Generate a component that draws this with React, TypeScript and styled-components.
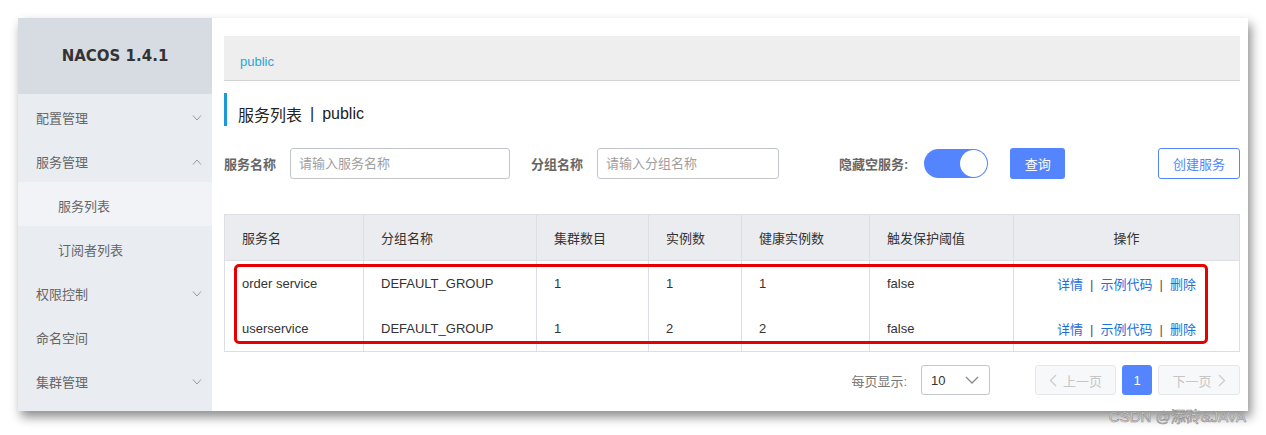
import React from 'react';
import styled, { createGlobalStyle } from 'styled-components';

const GlobalStyle = createGlobalStyle`
  body {
    margin: 0;
    background: #ffffff;
    font-family: "Liberation Sans", "Noto Sans CJK SC", sans-serif;
    font-size: 13px;
    color: #333;
  }
`;

const menus = [
  { label: '配置管理', arrow: 'down' },
  { label: '服务管理', arrow: 'up' },
  { label: '服务列表', sub: true, active: true },
  { label: '订阅者列表', sub: true },
  { label: '权限控制', arrow: 'down' },
  { label: '命名空间' },
  { label: '集群管理', arrow: 'down' },
];

const columns = [
  { title: '服务名', width: 139 },
  { title: '分组名称', width: 173 },
  { title: '集群数目', width: 112 },
  { title: '实例数', width: 93 },
  { title: '健康实例数', width: 128 },
  { title: '触发保护阈值', width: 144 },
  { title: '操作', width: 226, center: true },
];

const rows = [
  ['order service', 'DEFAULT_GROUP', '1', '1', '1', 'false'],
  ['userservice', 'DEFAULT_GROUP', '1', '2', '2', 'false'],
];

function Chevron({ dir }: { dir: string }) {
  return (
    <svg width="10" height="6" viewBox="0 0 10 6">
      <path
        d={dir === 'up' ? 'M1 5.5 L5 1 L9 5.5' : 'M1 0.5 L5 5 L9 0.5'}
        fill="none"
        stroke="#999"
        strokeWidth="1"
      />
    </svg>
  );
}

function App() {
  return (
    <Page>
      <GlobalStyle />
      <Window>
        <Sidebar>
          <Brand>NACOS 1.4.1</Brand>
          {menus.map((m) => (
            <MenuItem key={m.label} sub={!!m.sub} active={!!m.active}>
              <span>{m.label}</span>
              {m.arrow && <Chevron dir={m.arrow} />}
            </MenuItem>
          ))}
        </Sidebar>
        <Main>
          <Breadcrumb>public</Breadcrumb>
          <PageTitle>
            服务列表<Sep>|</Sep>public
          </PageTitle>
          <Filters>
            <Label>服务名称</Label>
            <Input width={220} placeholder="请输入服务名称" />
            <Label gap={21}>分组名称</Label>
            <Input width={182} placeholder="请输入分组名称" />
            <Label gap={60}>隐藏空服务:</Label>
            <Switch>
              <Knob />
            </Switch>
            <PrimaryButton>查询</PrimaryButton>
            <OutlineButton>创建服务</OutlineButton>
          </Filters>
          <TableWrap>
            <Table>
              <thead>
                <tr>
                  {columns.map((c) => (
                    <Th key={c.title} style={{ width: c.width }} center={!!c.center}>
                      {c.title}
                    </Th>
                  ))}
                </tr>
              </thead>
              <tbody>
                {rows.map((r, i) => (
                  <tr key={i}>
                    {r.map((v, j) => (
                      <Td key={j} first={i === 0}>
                        {v}
                      </Td>
                    ))}
                    <Td first={i === 0} center>
                      <Link>详情</Link>
                      <Bar>|</Bar>
                      <Link>示例代码</Link>
                      <Bar>|</Bar>
                      <Link>删除</Link>
                    </Td>
                  </tr>
                ))}
              </tbody>
            </Table>
            <Highlight />
          </TableWrap>
          <Pager>
            <PagerLabel>每页显示:</PagerLabel>
            <Select>
              <span>10</span>
              <svg width="14" height="8" viewBox="0 0 14 8">
                <path d="M1 1 L7 7 L13 1" fill="none" stroke="#888" strokeWidth="1.3" />
              </svg>
            </Select>
            <PageButton width={81} disabled>
              <svg width="8" height="13" viewBox="0 0 8 13">
                <path d="M7 1 L1.5 6.5 L7 12" fill="none" stroke="#ccc" strokeWidth="1.3" />
              </svg>
              上一页
            </PageButton>
            <PageButton width={30} current>
              1
            </PageButton>
            <PageButton width={82} disabled>
              下一页
              <svg width="8" height="13" viewBox="0 0 8 13">
                <path d="M1 1 L6.5 6.5 L1 12" fill="none" stroke="#ccc" strokeWidth="1.3" />
              </svg>
            </PageButton>
          </Pager>
        </Main>
        <Watermark>CSDN @添砖&amp;JAVA</Watermark>
      </Window>
    </Page>
  );
}

const Page = styled.div`
  padding: 18px 0 0 18px;
  height: 435px;
  box-sizing: border-box;
`;

const Window = styled.div`
  position: relative;
  display: flex;
  width: 1230px;
  height: 393px;
  background: #fff;
  box-shadow: 3px 6px 10px rgba(0, 0, 0, 0.45);
`;

const Sidebar = styled.aside`
  width: 194px;
  flex-shrink: 0;
  background: #e9ecf1;
`;

const Brand = styled.div`
  height: 76px;
  background: #d7dce3;
  display: flex;
  align-items: center;
  justify-content: center;
  font-family: "DejaVu Sans", sans-serif;
  font-weight: bold;
  font-size: 15px;
  color: #333;
`;

const MenuItem = styled.div<{ sub: boolean; active: boolean }>`
  height: 44px;
  box-sizing: border-box;
  padding: 3px 10px 0 ${(p) => (p.sub ? 40 : 18)}px;
  display: flex;
  align-items: center;
  justify-content: space-between;
  font-size: 13px;
  color: #666;
  background: ${(p) => (p.active ? '#f2f3f6' : 'transparent')};
`;

const Main = styled.main`
  flex: 1;
  padding: 18px 9px 0 12px;
`;

const Breadcrumb = styled.div`
  height: 45px;
  box-sizing: border-box;
  background: #eeeeee;
  border-bottom: 1px solid #d2d2d2;
  padding: 6px 16px 0;
  display: flex;
  align-items: center;
  color: #1fa8d8;
  font-size: 13px;
`;

const PageTitle = styled.h1`
  margin: 12px 0 0;
  height: 33px;
  box-sizing: border-box;
  border-left: 3px solid #1a9bd8;
  padding: 9px 0 0 11px;
  display: flex;
  align-items: center;
  font-weight: normal;
  font-size: 16px;
  color: #222;
`;

const Sep = styled.span`
  margin: 0 8px;
`;

const Filters = styled.div`
  margin-top: 22px;
  height: 31px;
  display: flex;
  align-items: center;
`;

const Label = styled.label<{ gap?: number }>`
  margin-left: ${(p) => p.gap || 0}px;
  margin-right: 14px;
  font-weight: bold;
  font-size: 13px;
  color: #666;
`;

const Input = styled.input<{ width: number }>`
  width: ${(p) => p.width}px;
  height: 31px;
  box-sizing: border-box;
  border: 1px solid #c4c6cf;
  border-radius: 3px;
  padding: 0 8px;
  font-family: inherit;
  font-size: 13px;
  &::placeholder {
    color: #a0a0a0;
  }
`;

const Switch = styled.div`
  width: 64px;
  height: 29px;
  border-radius: 15px;
  background: #5584ff;
  display: flex;
  align-items: center;
  justify-content: flex-end;
  padding-right: 1px;
  box-sizing: border-box;
  margin-left: 2px;
`;

const Knob = styled.div`
  width: 27px;
  height: 27px;
  border-radius: 50%;
  background: #fff;
`;

const PrimaryButton = styled.button`
  margin-left: 22px;
  width: 55px;
  height: 31px;
  border: none;
  border-radius: 3px;
  background: #5584ff;
  color: #fff;
  font-family: inherit;
  font-size: 13px;
`;

const OutlineButton = styled.button`
  margin-left: auto;
  width: 82px;
  height: 31px;
  border: 1px solid #5584ff;
  border-radius: 3px;
  background: #fff;
  color: #5584ff;
  font-family: inherit;
  font-size: 13px;
`;

const TableWrap = styled.div`
  position: relative;
  margin-top: 35px;
`;

const Table = styled.table`
  width: 1015px;
  border-collapse: collapse;
  table-layout: fixed;
  border: 1px solid #dcdee3;
`;

const Th = styled.th<{ center: boolean }>`
  height: 46px;
  box-sizing: border-box;
  background: #ebecf0;
  border: 1px solid #dcdee3;
  padding: 0 17px;
  text-align: ${(p) => (p.center ? 'center' : 'left')};
  font-weight: normal;
  font-size: 13px;
  color: #333;
`;

const Td = styled.td<{ first?: boolean; center?: boolean }>`
  height: ${(p) => (p.first ? 46 : 45)}px;
  box-sizing: border-box;
  border-left: 1px solid #dcdee3;
  border-right: 1px solid #dcdee3;
  padding: 0 17px;
  text-align: ${(p) => (p.center ? 'center' : 'left')};
  font-size: 13px;
  color: #333;
`;

const Link = styled.a`
  color: #1d6fdc;
`;

const Bar = styled.span`
  margin: 0 7px;
  color: #555;
`;

const Highlight = styled.div`
  position: absolute;
  left: 10px;
  top: 50px;
  width: 974px;
  height: 80px;
  box-sizing: border-box;
  border: 3px solid #e60000;
  border-radius: 5px;
  pointer-events: none;
`;

const Pager = styled.div`
  margin-top: 13px;
  display: flex;
  align-items: center;
  justify-content: flex-end;
  height: 30px;
`;

const PagerLabel = styled.span`
  color: #777;
  font-size: 13px;
  margin-right: 14px;
`;

const Select = styled.div`
  width: 69px;
  height: 30px;
  box-sizing: border-box;
  border: 1px solid #c4c6cf;
  border-radius: 3px;
  display: flex;
  align-items: center;
  justify-content: space-between;
  padding: 0 10px 0 9px;
  font-size: 13px;
  color: #333;
  margin-right: 39px;
`;

const PageButton = styled.div<{ width: number; disabled?: boolean; current?: boolean }>`
  width: ${(p) => p.width}px;
  height: 30px;
  box-sizing: border-box;
  border-radius: 3px;
  margin-left: 6px;
  display: flex;
  align-items: center;
  justify-content: center;
  gap: 6px;
  font-size: 13px;
  color: ${(p) => (p.current ? '#fff' : '#c6c6c6')};
  background: ${(p) => (p.current ? '#5584ff' : '#f7f8fa')};
  border: 1px solid ${(p) => (p.current ? '#5584ff' : '#e6e7eb')};
`;

const Watermark = styled.div`
  position: absolute;
  right: 2px;
  bottom: -15px;
  font-size: 15px;
  color: #e8e8e8;
  -webkit-text-stroke: 0.6px #8a8a8a;
`;

export default App;
